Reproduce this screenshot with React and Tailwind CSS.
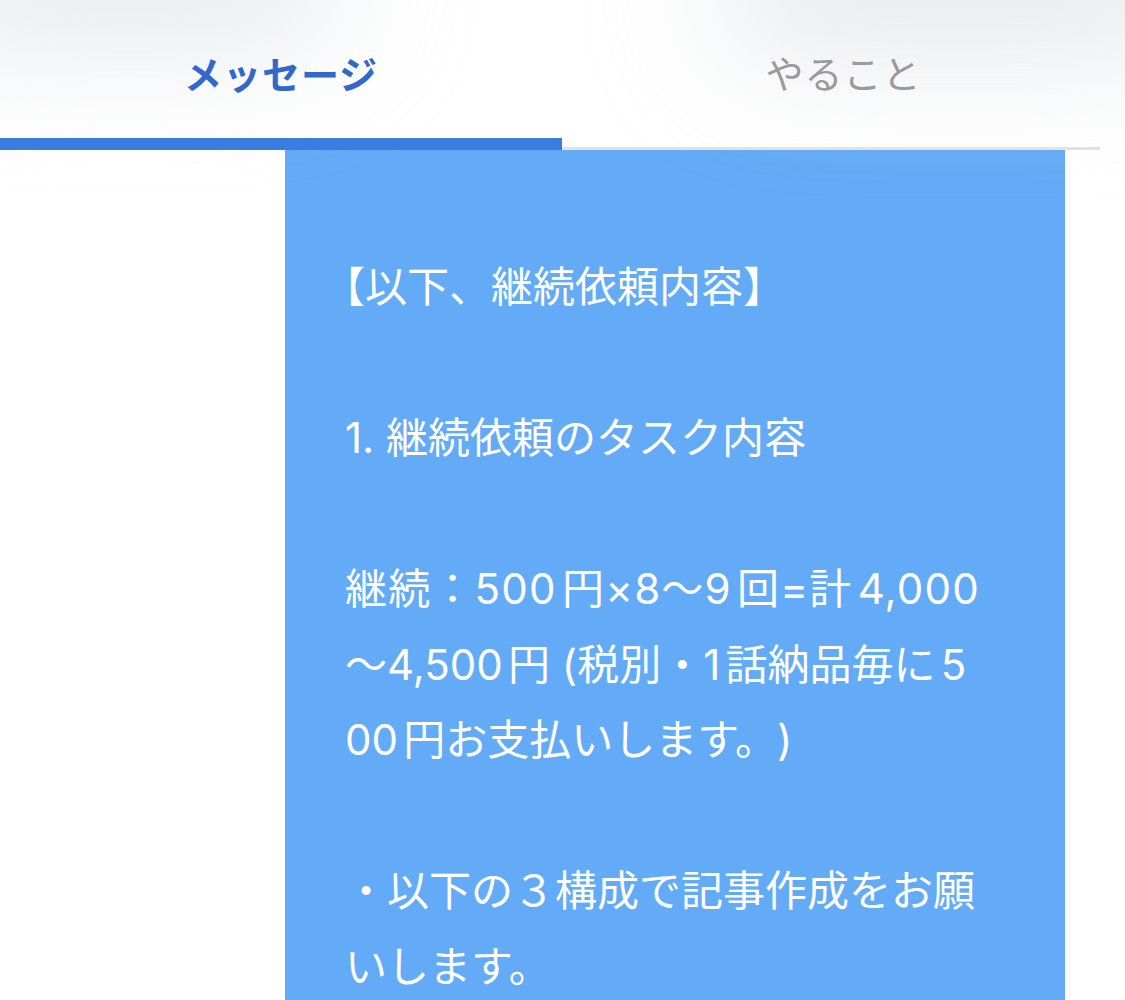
export default function App() {
  const font = { fontFamily: 'Inter, "Noto Sans CJK JP", sans-serif' };
  const lines = [
    { t: "【以下、継続依頼内容】", c: "-ml-[22px]" },
    { t: "" },
    { t: "1. 継続依頼のタスク内容" },
    { t: "" },
    { t: "継続：500円×8〜9回=計4,000", c: "tracking-[1.2px]" },
    { t: "〜4,500円 (税別・1話納品毎に5" },
    { t: "00円お支払いします。)" },
    { t: "" },
    { t: "・以下の３構成で記事作成をお願" },
    { t: "いします。" },
    { t: "" },
  ];
  return (
    <div className="relative w-[1125px] h-[1000px] overflow-hidden bg-white" style={font}>
      {/* soft shadows from the header cards above */}
      <div className="absolute -top-[80px] -left-[80px] w-[420px] h-[120px] rounded-full bg-gray-300/60 blur-3xl" />
      <div className="absolute -top-[80px] left-[720px] w-[480px] h-[130px] rounded-full bg-gray-300/60 blur-3xl" />

      <div className="relative flex w-[1125px] items-end">
        <div className="flex w-[562px] flex-col">
          <div className="flex h-[138px] items-center justify-center pt-[12px]">
            <span className="text-[38px] font-bold tracking-[1px] text-[#3168c9]">メッセージ</span>
          </div>
          <div className="h-[12px] bg-[#3a7de0]" />
        </div>
        <div className="flex flex-1 flex-col">
          <div className="flex h-[147px] items-center justify-center pt-[1px]">
            <span className="text-[38px] text-[#9a9a9a] tracking-[1px]">やること</span>
          </div>
          <div className="h-[3px] w-[538px] bg-[#e2e2e2]" />
        </div>
      </div>

      <div className="ml-[285px] w-[780px] bg-[#63abf6] pt-[99px] pb-10 pl-[60px] pr-[30px] text-white [text-spacing-trim:space-all] [text-autospace:normal]">
        {lines.map((l, i) => (
          <div
            key={i}
            className={`h-[75.5px] whitespace-pre text-[42px] leading-[75.5px] ${l.c || ""}`}
          >
            {l.t || "\u00a0"}
          </div>
        ))}
      </div>
    </div>
  );
}
